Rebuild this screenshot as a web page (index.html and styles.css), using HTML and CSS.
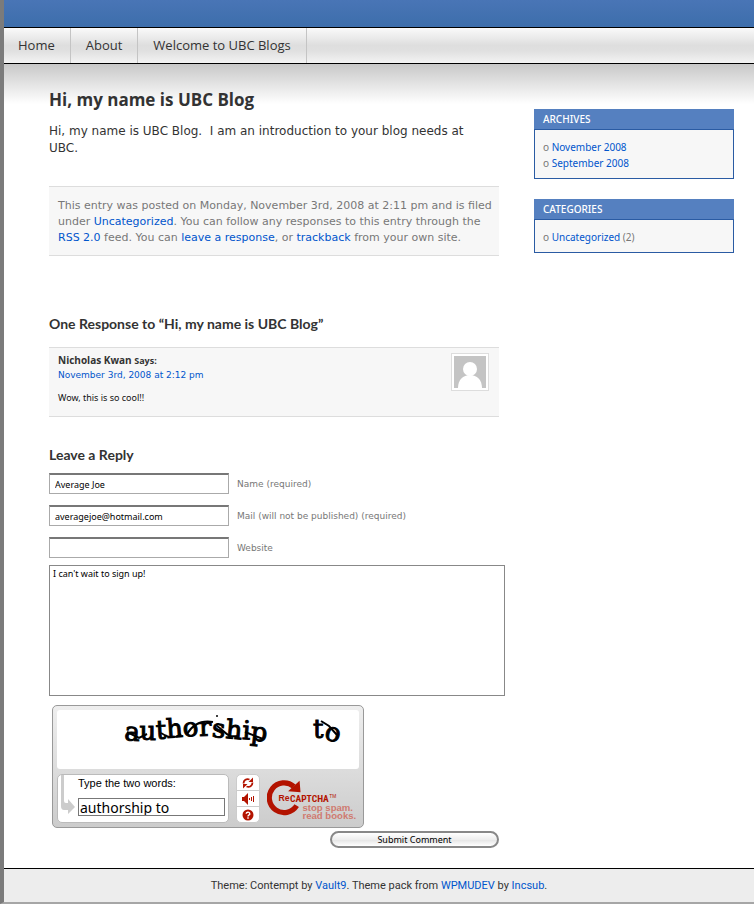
FILE: index.html
```html
<!DOCTYPE html>
<html lang="en">
<head>
    <meta charset="UTF-8">
    <meta name="viewport" content="width=device-width, initial-scale=1.0">
    <title>Hi, my name is UBC Blog</title>
    <link rel="stylesheet" href="styles.css">
</head>
<body>
    <div class="page">
        <header class="header"></header>
        <nav class="menu">
            <a href="#">Home</a>
            <a href="#">About</a>
            <a href="#">Welcome to UBC Blogs</a>
        </nav>

        <div class="wrapper">
            <main class="content">
                <h1>Hi, my name is UBC Blog</h1>
                <p class="entry">Hi, my name is UBC Blog.&nbsp; I am an introduction to your blog needs at UBC.</p>
                <p class="postmeta">This entry was posted on Monday, November 3rd, 2008 at 2:11 pm and is filed under <a href="#">Uncategorized</a>. You can follow any responses to this entry through the <a href="#">RSS 2.0</a> feed. You can <a href="#">leave a response</a>, or <a href="#">trackback</a> from your own site.</p>

                <h2>One Response to “Hi, my name is UBC Blog”</h2>
                <div class="comment">
                    <div class="comment-text">
                        <div class="author">Nicholas Kwan <span>Says:</span></div>
                        <a class="date" href="#">November 3rd, 2008 at 2:12 pm</a>
                        <p>Wow, this is so cool!!</p>
                    </div>
                    <svg class="avatar" viewBox="0 0 32 32">
                        <rect width="32" height="32" fill="#c4c4c4"/>
                        <circle cx="16" cy="13" r="7" fill="#fff"/>
                        <path d="M4 32c0-8 5-13 12-13s12 5 12 13z" fill="#fff"/>
                    </svg>
                </div>

                <h2>Leave a Reply</h2>
                <form class="reply">
                    <div class="field">
                        <input type="text" id="author" value="Average Joe">
                        <label for="author">Name (required)</label>
                    </div>
                    <div class="field">
                        <input type="text" id="email" value="averagejoe@hotmail.com">
                        <label for="email">Mail (will not be published) (required)</label>
                    </div>
                    <div class="field">
                        <input type="text" id="url">
                        <label for="url">Website</label>
                    </div>
                    <textarea aria-label="Comment">I can't wait to sign up!</textarea>

                    <div class="captcha">
                        <svg class="words" viewBox="0 0 302 59">
                            <g class="warped">
                                <text x="67" y="30" dy="0 0 -1 -1 -1 -1 1 1 1 1" rotate="4 0 -3 -4 -6 -2 4 5 4 6">authorship</text>
                                <text x="256" y="28" dy="0 1" rotate="0 14">to</text>
                            </g>
                            <path d="M70 22l12 6 8-4M104 23c8 5 14 6 20 1M130 24c6-10 14-14 26-12M160 16c8 5 10 12 20 10M188 22l18 7M264 11l8 5 8 9" fill="none" stroke="#000" stroke-width="2"/>
                            <circle cx="160" cy="6" r="1" fill="#000"/>
                        </svg>
                        <div class="captcha-row">
                            <div class="answer">
                                <svg class="arrow" viewBox="0 0 14 40">
                                    <path d="M0 0h3v26q0 2 2 2h2v-4l7 8-7 7v-4H3q-3 0-3-4z" fill="#ccc"/>
                                </svg>
                                <label for="answer">Type the two words:</label>
                                <input type="text" id="answer" value="authorship to">
                            </div>
                            <div class="tools">
                                <button type="button" aria-label="New words">
                                    <svg viewBox="0 0 12 12">
                                        <path d="M1.5 6.5c0-3.500 3-5 6-4M10.500 5.500c0 3.500-3 5-6 4" fill="none" stroke="#b31300" stroke-width="1.8"/>
                                        <path d="M11 .5v4.500H6.500zM1 11.500V7h4.500z" fill="#b31300"/>
                                    </svg>
                                </button>
                                <button type="button" aria-label="Audio">
                                    <svg viewBox="0 0 12 12">
                                        <path d="M0 4h2l4-4v12L2 8H0z" fill="#b31300"/>
                                        <path d="M7.5 5v2M9.5 4v4M11.5 3v6" stroke="#b31300"/>
                                    </svg>
                                </button>
                                <button type="button" aria-label="Help">
                                    <svg viewBox="0 0 12 12">
                                        <circle cx="6" cy="6" r="5.5" fill="#b31300"/>
                                        <path d="M4.2 4.8a1.8 1.6 0 1 1 2.6 1.4q-.8.4-.8 1.2M6 8.3v1.5" fill="none" stroke="#fff" stroke-width="1.4"/>
                                    </svg>
                                </button>
                            </div>
                            <svg class="logo" viewBox="0 0 96 48">
                                <path d="M31 32a15.500 15.500 0 1 1-3-20" fill="none" stroke="#b31300" stroke-width="5.5"/>
                                <path d="M34 6l1 12-13-1z" fill="#b31300"/>
                                <text class="logo-re" x="12" y="27">Re</text>
                                <text class="logo-name" x="24" y="28">CAPTCHA</text>
                                <text class="logo-tm" x="65" y="24">TM</text>
                                <text class="logo-tag" x="37" y="38">stop spam.</text>
                                <text class="logo-tag" x="37" y="46">read books.</text>
                            </svg>
                        </div>
                    </div>
                    <button type="submit" class="submit">Submit Comment</button>
                </form>
            </main>

            <aside class="sidebar">
                <section>
                    <h3>ARCHIVES</h3>
                    <ul>
                        <li><a href="#">November 2008</a></li>
                        <li><a href="#">September 2008</a></li>
                    </ul>
                </section>
                <section>
                    <h3>CATEGORIES</h3>
                    <ul>
                        <li><a href="#">Uncategorized</a> (2)</li>
                    </ul>
                </section>
            </aside>
        </div>

        <footer class="footer">Theme: Contempt by <a href="#">Vault9</a>. Theme pack from <a href="#">WPMUDEV</a> by <a href="#">Incsub</a>.</footer>
    </div>
</body>
</html>
```
FILE: styles.css
```css
* {
    box-sizing: border-box;
}
body {
    margin: 0;
    background: #fff;
    color: #333;
    font-family: "DejaVu Sans", Verdana, sans-serif;
    font-size: 11px;
}
a {
    color: #05c;
    text-decoration: none;
}
h1, h2, h3, p, ul {
    margin: 0;
    padding: 0;
}
.page {
    border-left: 4px solid #7b7b7b;
    border-bottom: 2px solid #a6a6a6;
}
.header {
    height: 28px;
    background: linear-gradient(#4975b6, #3d6eab);
    border-bottom: 1px solid #000;
}

/* Menu */
.menu {
    display: flex;
    height: 36px;
    background: linear-gradient(#fafafa, #dedede 50%, #e0e0e0 65%, #f3f3f3);
    border-bottom: 1px solid #000;
}
.menu a {
    padding: 0 15px;
    border-right: 1px solid #c4c4c4;
    color: #333;
    font-family: "Open Sans", sans-serif;
    font-size: 13px;
    font-weight: 500;
    line-height: 34px;
}
.menu a:first-child {
    padding-left: 14px;
}

/* Columns */
.wrapper {
    display: flex;
    align-items: flex-start;
    gap: 35px;
    padding: 24px 20px 20px 45px;
    background: linear-gradient(#c8c8c8, #fff 40px);
}
.content {
    flex: 1;
    min-width: 0;
}
.content h1 {
    font-family: "Open Sans", sans-serif;
    font-size: 17px;
    line-height: 24px;
}
.content h2 {
    font-family: Lato, sans-serif;
    font-size: 14px;
    line-height: 20px;
}
.entry {
    margin: 11px 0 29px;
    padding-right: 20px;
    font-size: 12px;
    line-height: 17px;
}
.postmeta {
    margin-bottom: 58px;
    padding: 11px 3px 9px 9px;
    background: #f7f7f7;
    border-top: 1px solid #ddd;
    border-bottom: 1px solid #ddd;
    color: #777;
    line-height: 16px;
}

/* Comment */
.comment {
    display: flex;
    justify-content: space-between;
    margin: 13px 0 28px;
    padding: 5px 10px 11px 9px;
    background: #f7f7f7;
    border-top: 1px solid #ddd;
    border-bottom: 1px solid #ddd;
    font-size: 9px;
    line-height: 14px;
}
.author {
    font-family: "Open Sans", sans-serif;
    font-size: 10px;
    font-weight: bold;
}
.author span {
    font-size: 9px;
}
.comment p {
    margin-top: 9px;
    font-family: "Noto Sans", sans-serif;
    color: #111;
}
.avatar {
    width: 38px;
    height: 38px;
    padding: 2px;
    background: #fff;
    border: 1px solid #ddd;
}

/* Reply form */
.reply {
    display: flex;
    flex-direction: column;
    padding-top: 8px;
}
.field {
    display: flex;
    align-items: center;
    gap: 8px;
    margin-bottom: 11px;
    color: #777;
    font-size: 9px;
}
.field input {
    width: 180px;
    height: 21px;
    padding: 0 5px;
    border: 1px solid #aaa;
    border-top: 2px solid #777;
    font-family: "Noto Sans", sans-serif;
    font-size: 9px;
}
.reply textarea {
    width: calc(100% + 6px);
    height: 131px;
    margin-top: -4px;
    padding: 1px 3px;
    border: 1px solid #888;
    font-family: "Noto Sans", sans-serif;
    font-size: 9px;
    resize: none;
}
.submit {
    align-self: flex-end;
    width: 169px;
    height: 17px;
    margin-top: 3px;
    padding: 0;
    background: linear-gradient(#fff, #eee 50%, #e4e4e4 51%, #fff);
    border: 2px solid #888;
    border-radius: 9px;
    color: #000;
    font-family: "Noto Sans", sans-serif;
    font-size: 9px;
    line-height: 13px;
}

/* Captcha */
.captcha {
    width: 312px;
    margin: 9px 0 0 3px;
    padding: 4px;
    background: linear-gradient(#eee, #ccc);
    border: 1px solid #999;
    border-radius: 5px;
}
.words {
    display: block;
    width: 302px;
    height: 59px;
    background: #fff;
    border-radius: 3px;
}
.warped {
    font-family: "DejaVu Serif", serif;
    font-size: 26px;
    stroke: #000;
    stroke-width: 1px;
}
.captcha-row {
    display: flex;
    gap: 7px;
    margin-top: 5px;
}
.answer {
    position: relative;
    width: 172px;
    height: 49px;
    padding: 1px 4px 0 20px;
    background: #fff;
    border: 1px solid #bbb;
    border-radius: 5px;
    color: #000;
    font-family: "Liberation Sans", sans-serif;
}
.arrow {
    position: absolute;
    left: 3px;
    top: 0;
    width: 14px;
    height: 40px;
}
.answer label {
    display: block;
    line-height: 14px;
}
.answer input {
    display: block;
    width: 147px;
    height: 18px;
    margin-top: 8px;
    padding: 0 1px;
    border: 1px solid #777;
    font-family: "Noto Sans", sans-serif;
    font-size: 14px;
}
.tools {
    display: flex;
    flex-direction: column;
    width: 25px;
    height: 49px;
    background: #fff;
    border: 1px solid #ccc;
    border-radius: 5px;
}
.tools button {
    flex: 1;
    display: flex;
    align-items: center;
    justify-content: center;
    padding: 0;
    background: none;
    border: 0;
}
.tools button + button {
    border-top: 1px solid #ccc;
}
.tools svg {
    width: 12px;
    height: 12px;
}
.logo {
    width: 96px;
    height: 48px;
}
.logo text {
    font-family: "Liberation Sans", sans-serif;
    font-weight: bold;
    fill: #b31300;
}
.logo .logo-re {
    font-size: 9px;
}
.logo .logo-name {
    font-family: "Roboto Condensed", Roboto, sans-serif;
    font-size: 10px;
}
.logo .logo-tm {
    font-size: 5px;
    font-weight: normal;
}
.logo .logo-tag {
    font-size: 10px;
    fill: #cf7a70;
}

/* Sidebar */
.sidebar {
    width: 200px;
    padding-top: 21px;
}
.sidebar section {
    margin-bottom: 20px;
    background: #f7f7f7;
    border: 1px solid #2a5ba3;
}
.sidebar h3 {
    margin: -1px -1px 0;
    padding-left: 9px;
    background: #5580c0;
    border-bottom: 1px solid #2a5ba3;
    color: #fff;
    font-family: "Noto Sans", sans-serif;
    font-size: 10px;
    font-weight: 500;
    line-height: 20px;
}
.sidebar ul {
    padding: 9px 8px 7px;
    list-style: none;
    color: #777;
    font-family: "Noto Sans", sans-serif;
    font-size: 10px;
    line-height: 16px;
}
.sidebar li::before {
    content: "o ";
}

/* Footer */
.footer {
    background: #ededed;
    border-top: 1px solid #000;
    font-family: Roboto, sans-serif;
    font-size: 11px;
    line-height: 33px;
    text-align: center;
}
```
